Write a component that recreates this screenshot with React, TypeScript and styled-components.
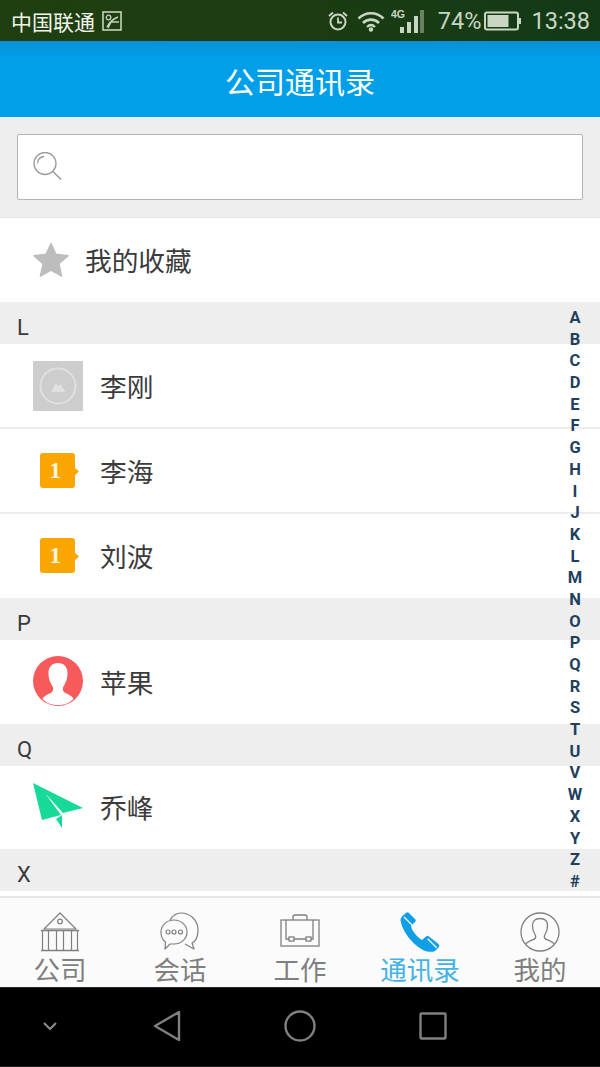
import React from "react";
import styled, { createGlobalStyle } from "styled-components";

const Global = createGlobalStyle`
  html, body { margin: 0; padding: 0; background: #000; }
  * { box-sizing: border-box; }
  body { font-family: "Roboto", "Noto Sans CJK SC", sans-serif; }
`;

const CJK = `"Noto Sans CJK SC", "Roboto", sans-serif`;

const Page = styled.div`
  position: relative;
  width: 600px;
  height: 1067px;
  display: flex;
  flex-direction: column;
  overflow: hidden;
  background: #fff;
`;

const StatusBar = styled.div`
  height: 41px;
  flex: none;
  background: linear-gradient(90deg, #203f10 0%, #1c3c12 50%, #123a17 100%);
  display: flex;
  align-items: center;
  justify-content: space-between;
  padding: 1px 10px 0 11px;
  color: #c9d6c4;
`;
const StatusGroup = styled.div`
  display: flex;
  align-items: center;
`;
const Carrier = styled.span`
  font: 400 21px/41px ${CJK};
  color: #f0f4ec;
  margin-right: 7px;
`;
const StatusText = styled.span<{ $ml: number }>`
  font: 400 23.5px/41px "Roboto", sans-serif;
  margin-left: ${(p) => p.$ml}px;
`;
const StatusGap = styled.span<{ $w: number }>`
  width: ${(p) => p.$w}px;
`;

const Header = styled.header`
  height: 76px;
  flex: none;
  background: linear-gradient(180deg, #0a8fd6 0%, #019fe8 22%, #009fe9 100%);
  display: flex;
  align-items: center;
  justify-content: center;
  color: #fff;
  font: 400 30px/1 ${CJK};
  padding-top: 2px;
`;

const SearchArea = styled.div`
  height: 101px;
  flex: none;
  background: #eeeeee;
  padding: 17px;
  border-bottom: 1px solid #e6e6e6;
`;
const SearchBox = styled.div`
  height: 66px;
  background: #fff;
  border: 1px solid #b4b4b4;
  border-radius: 2px;
  display: flex;
  align-items: center;
  padding-left: 14px;
`;

const List = styled.div`
  flex: 1;
  min-height: 0;
  overflow: hidden;
`;
const FavRow = styled.div`
  height: 84px;
  display: flex;
  align-items: center;
  padding-left: 33px;
  gap: 16px;
  background: #fff;
`;
const RowName = styled.span<{ $nudge?: boolean }>`
  font: 400 26.7px/1 ${CJK};
  color: #3b3b3b;
  padding-top: ${(p) => (p.$nudge ? 2 : 0)}px;
`;
const SectionHead = styled.div`
  height: 42px;
  background: #eeeeee;
  padding: 9px 0 0 17px;
  display: flex;
  align-items: center;
  font: 400 22px/1 "Roboto", sans-serif;
  color: #3a3a3a;
`;
const Row = styled.div<{ $h: number; $line?: boolean; $pb?: number }>`
  height: ${(p) => p.$h}px;
  display: flex;
  align-items: center;
  padding: 0 0 ${(p) => p.$pb ?? 0}px 33px;
  gap: 17px;
  background: #fff;
  border-bottom: ${(p) => (p.$line ? "2px solid #ececec" : "none")};
`;
const AvatarSlot = styled.div`
  width: 50px;
  height: 50px;
  flex: none;
  display: flex;
  align-items: center;
  justify-content: center;
`;

const IndexBar = styled.div`
  position: absolute;
  top: 307px;
  right: 13px;
  width: 24px;
  display: flex;
  flex-direction: column;
  align-items: center;
`;
const IndexLetter = styled.span`
  height: 21.7px;
  font: 700 16.5px/21.7px "Roboto", sans-serif;
  color: #1f3f5f;
`;

const TabBar = styled.nav`
  height: 91px;
  flex: none;
  background: #fbfbfb;
  border-top: 2px solid #e6e6e6;
  display: grid;
  grid-template-columns: repeat(5, 1fr);
`;
const Tab = styled.div<{ $active?: boolean }>`
  display: flex;
  flex-direction: column;
  align-items: center;
  padding-top: 13px;
  color: ${(p) => (p.$active ? "#45b2e5" : "#7f7f7f")};
`;
const TabIcon = styled.div`
  height: 42px;
  display: flex;
  align-items: center;
  justify-content: center;
`;
const TabLabel = styled.span`
  font: 400 26.5px/32px ${CJK};
`;

const NavBar = styled.div`
  height: 80px;
  flex: none;
  background: #000;
  display: grid;
  grid-template-columns: 100px 133px 133px 133px;
  justify-items: center;
  align-items: center;
  padding-bottom: 2px;
  border-top: 1px solid #2b2b2b;
  border-bottom: 1px solid #222;
`;

const Alarm = () => (
  <svg width="22" height="22" viewBox="0 0 22 22" fill="none" stroke="#c9d6c4" strokeWidth="2">
    <circle cx="11" cy="12" r="7.5" />
    <path d="M11 7.5V12.5H15" strokeWidth="1.8" />
    <path d="M2 6 6 2.5M20 6 16 2.5" strokeWidth="1.8" />
  </svg>
);
const Wifi = () => (
  <svg width="28" height="22" viewBox="0 0 28 22" fill="none" stroke="#c9d6c4" strokeWidth="2.6">
    <path d="M1.5 8.5C8.5 1.5 19.5 1.5 26.5 8.5" />
    <path d="M6 13C10.5 8.5 17.5 8.5 22 13" />
    <path d="M10 17C12.5 14.5 15.5 14.5 18 17" strokeWidth="2.2" />
    <circle cx="14" cy="19.5" r="2.2" fill="#c9d6c4" stroke="none" />
  </svg>
);
const Signal = () => (
  <svg width="33" height="26" viewBox="0 0 33 26" fill="#c9d6c4">
    <text x="0" y="10" fontFamily="Liberation Sans" fontWeight="700" fontSize="10.5">4G</text>
    <rect x="9" y="19" width="4" height="6" />
    <rect x="16" y="14" width="4" height="11" />
    <rect x="23" y="8" width="4" height="17" />
    <rect x="29" y="2" width="4" height="23" opacity="0.45" />
  </svg>
);
const Battery = () => (
  <svg width="37" height="20" viewBox="0 0 37 20" fill="none">
    <rect x="1" y="1.5" width="33" height="17" rx="2" stroke="#c9d6c4" strokeWidth="2" />
    <rect x="3.5" y="4" width="21" height="12" fill="#c9d6c4" />
    <rect x="35" y="7" width="2" height="6" fill="#c9d6c4" />
  </svg>
);
const PicNote = () => (
  <svg width="20" height="20" viewBox="0 0 20 20" fill="none" stroke="#c4d2bd" strokeWidth="1.6">
    <rect x="1" y="1" width="18" height="18" />
    <circle cx="6.5" cy="6.5" r="2.3" strokeWidth="1.3" />
    <path d="M5 16C7 12 11 8 16 6M17 11H9L6 17" strokeWidth="1.5" />
  </svg>
);
const SearchIcon = () => (
  <svg width="30" height="30" viewBox="0 0 30 30" fill="none" stroke="#9a9a9a" strokeWidth="1.3">
    <circle cx="13" cy="11.5" r="11" />
    <path d="M5.5 11.5C5.5 7.5 8.5 5 12 4.5" />
    <path d="M21 19.5 29 27.5" strokeWidth="1.6" />
  </svg>
);
const Star = () => (
  <svg width="36" height="36" viewBox="0 0 38 38">
    <path
      d="M19 1.5 24.2 13 37 14.5 27.4 23 30.2 36 19 29.7 7.8 36 10.6 23 1 14.5 13.8 13Z"
      fill="#bdbdbd"
      stroke="#bdbdbd"
      strokeWidth="1.5"
      strokeLinejoin="round"
    />
  </svg>
);
const Placeholder = () => (
  <svg width="50" height="50" viewBox="0 0 50 50">
    <rect width="50" height="50" fill="#cdcdcd" />
    <circle cx="25" cy="25" r="17.5" fill="none" stroke="#e0e0e0" strokeWidth="2" />
    <path d="M18 31 23 22 25.5 25 27.5 23 32.5 31Z" fill="#e0e0e0" />
  </svg>
);
const Badge = () => (
  <svg width="50" height="50" viewBox="0 0 50 50">
    <path
      d="M10 7H39C41 7 42 8 42 10V22L46 25.5 42 29V39C42 41 41 42 39 42H10C8 42 7 41 7 39V10C7 8 8 7 10 7Z"
      fill="#fba500"
    />
    <text x="16.5" y="32" fontFamily="Liberation Serif" fontWeight="700" fontSize="23" fill="#fff6e0">1</text>
  </svg>
);
const RedUser = () => (
  <svg width="50" height="50" viewBox="0 0 50 50">
    <circle cx="25" cy="25" r="25" fill="#f65a5b" />
    <path
      d="M25 7C19 7 15.5 11 15.5 17C15.5 20 16 24 17.5 26.5C18 28 19.2 30 20 31.5C20.5 33.5 20 35 18.5 36.5C15 38.5 11 39.5 9.5 43C14 47.5 19 49 25 49C31 49 36 47.5 40.5 43C39 39.5 35 38.5 31.5 36.5C30 35 29.5 33.5 30 31.5C30.8 30 32 28 32.5 26.5C34 24 34.5 20 34.5 17C34.5 11 31 7 25 7Z"
      fill="#fff"
    />
  </svg>
);
const Plane = () => (
  <svg width="50" height="50" viewBox="0 0 50 50">
    <path d="M0 1 50 26 30 31 12 11 28 33 9 38Z" fill="#17d998" />
    <path d="M23 37 29 33 29 46Z" fill="#17d998" />
  </svg>
);

const Bank = () => (
  <svg width="40" height="40" viewBox="0 0 40 40" fill="none" stroke="#7f7f7f" strokeWidth="1.2">
    <path d="M20 1 36 17H4Z" strokeLinejoin="round" />
    <circle cx="20" cy="9.5" r="2.3" />
    <path d="M1 18.5H39" strokeWidth="1.6" />
    <path d="M2.5 19V38M8.5 19V38M16.5 19V38M23.5 19V38M31.5 19V38M37.5 19V38" />
    <path d="M1 38.5H39" strokeWidth="1.6" />
  </svg>
);
const Chat = () => (
  <svg width="40" height="40" viewBox="0 0 40 40" fill="none" stroke="#7f7f7f" strokeWidth="1.2" strokeLinejoin="round">
    <path d="M10 8C13 3 17 1 21 1C30 1 38 8 38 18C38 24 36 29 32 31L34 37L25 32" />
    <path d="M5.5 30C2.5 28 1 24 1 20C1 13 7 8 14 8C21 8 27 13 27 20C27 27 21 32 14 32H10L5 37Z" fill="#fbfbfb" />
    <circle cx="8" cy="20" r="2" />
    <circle cx="14" cy="20" r="2" />
    <circle cx="20.5" cy="20" r="2" />
  </svg>
);
const Briefcase = () => (
  <svg width="40" height="40" viewBox="0 0 40 40" fill="none" stroke="#7f7f7f" strokeWidth="1.3">
    <path d="M13 8V5Q13 3 15 3H25Q27 3 27 5V8" />
    <rect x="1" y="8" width="38" height="26" />
    <path d="M6 8V27H33V8" />
    <rect x="9" y="25" width="5" height="4" fill="#fbfbfb" />
    <rect x="26" y="25" width="5" height="4" fill="#fbfbfb" />
  </svg>
);
const Phone = () => (
  <svg width="40" height="40" viewBox="0 0 40 40">
    <path
      d="M6 1C7 0 8 0 9 1L15 7C16 8 16 9 15 10L11 14C12 19 17 25 22 28L26 24.5C27 23.5 28 23.5 29 24.5L38.5 32C39.5 33 39.5 34.5 38.5 35.5L35 39C33 40 30 40 27 39.5C15 36 2 20 0.5 8C0.5 6 2 4 3.5 3Z"
      fill="#109fe4"
    />
    <path d="M4 5 13 14M27.7 26.7 36.7 35.7" stroke="#fbfbfb" strokeWidth="1.3" />
  </svg>
);
const UserCircle = () => (
  <svg width="40" height="40" viewBox="0 0 40 40" fill="none" stroke="#7f7f7f" strokeWidth="1.3">
    <circle cx="20" cy="20" r="19" />
    <path d="M5.5 32C9 28.5 14 28 15.5 26C16 24.5 15.5 23 14.5 21.5C13 19 12.5 16 12.5 13.5C12.5 9 15.5 6.5 20 6.5C24.5 6.5 27.5 9 27.5 13.5C27.5 16 27 19 25.5 21.5C24.5 23 24 24.5 24.5 26C26 28 31 28.5 34.5 32" />
  </svg>
);

const NavChevron = () => (
  <svg width="16" height="10" viewBox="0 0 16 10" fill="none" stroke="#8a8a8a" strokeWidth="2.2">
    <path d="M2 2 8 8 14 2" />
  </svg>
);
const NavBack = () => (
  <svg width="28" height="32" viewBox="0 0 28 32" fill="none" stroke="#808080" strokeWidth="2.4" strokeLinejoin="round">
    <path d="M26 2V30L2 16Z" />
  </svg>
);
const NavHome = () => (
  <svg width="32" height="32" viewBox="0 0 32 32" fill="none" stroke="#808080" strokeWidth="2.4">
    <circle cx="16" cy="16" r="14.5" />
  </svg>
);
const NavRecent = () => (
  <svg width="28" height="28" viewBox="0 0 28 28" fill="none" stroke="#808080" strokeWidth="2.4" strokeLinejoin="round">
    <rect x="1.5" y="1.5" width="25" height="25" rx="1" />
  </svg>
);

const letters = "ABCDEFGHIJKLMNOPQRSTUVWXYZ#".split("");

const tabs = [
  { label: "公司", icon: <Bank /> },
  { label: "会话", icon: <Chat /> },
  { label: "工作", icon: <Briefcase /> },
  { label: "通讯录", icon: <Phone />, active: true },
  { label: "我的", icon: <UserCircle /> },
];

const Spacer = styled.div`
  height: 5px;
  background: #fff;
`;

export default function App() {
  return (
    <Page>
      <Global />
      <StatusBar>
        <StatusGroup>
          <Carrier>中国联通</Carrier>
          <PicNote />
        </StatusGroup>
        <StatusGroup>
          <Alarm />
          <StatusGap $w={8} />
          <Wifi />
          <StatusGap $w={6} />
          <Signal />
          <StatusText $ml={14}>74%</StatusText>
          <StatusGap $w={3} />
          <Battery />
          <StatusText $ml={10}>13:38</StatusText>
        </StatusGroup>
      </StatusBar>
      <Header>公司通讯录</Header>
      <SearchArea>
        <SearchBox>
          <SearchIcon />
        </SearchBox>
      </SearchArea>
      <List>
        <FavRow>
          <Star />
          <RowName>我的收藏</RowName>
        </FavRow>
        <SectionHead>L</SectionHead>
        <Row $h={85} $line>
          <AvatarSlot><Placeholder /></AvatarSlot>
          <RowName $nudge>李刚</RowName>
        </Row>
        <Row $h={85} $line>
          <AvatarSlot><Badge /></AvatarSlot>
          <RowName $nudge>李海</RowName>
        </Row>
        <Row $h={84} $pb={1}>
          <AvatarSlot><Badge /></AvatarSlot>
          <RowName $nudge>刘波</RowName>
        </Row>
        <SectionHead>P</SectionHead>
        <Row $h={84} $pb={2}>
          <AvatarSlot><RedUser /></AvatarSlot>
          <RowName $nudge>苹果</RowName>
        </Row>
        <SectionHead>Q</SectionHead>
        <Row $h={83} $pb={1}>
          <AvatarSlot><Plane /></AvatarSlot>
          <RowName>乔峰</RowName>
        </Row>
        <SectionHead>X</SectionHead>
        <Spacer />
      </List>
      <TabBar>
        {tabs.map((t) => (
          <Tab key={t.label} $active={t.active}>
            <TabIcon>{t.icon}</TabIcon>
            <TabLabel>{t.label}</TabLabel>
          </Tab>
        ))}
      </TabBar>
      <NavBar>
        <NavChevron />
        <NavBack />
        <NavHome />
        <NavRecent />
      </NavBar>
      <IndexBar>
        {letters.map((l) => (
          <IndexLetter key={l}>{l}</IndexLetter>
        ))}
      </IndexBar>
    </Page>
  );
}
